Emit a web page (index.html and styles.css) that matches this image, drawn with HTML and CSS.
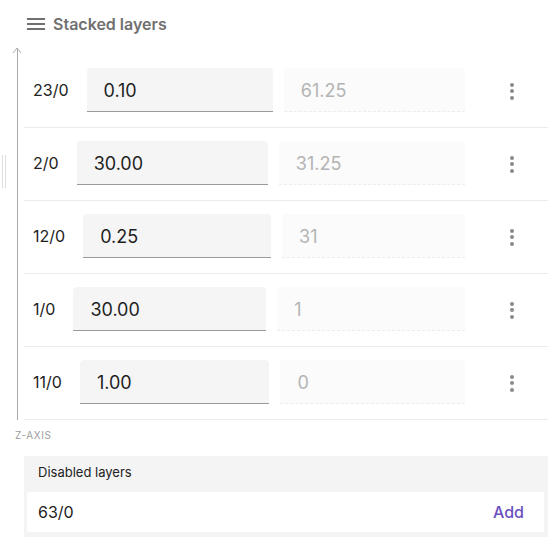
FILE: index.html
```html
<!DOCTYPE html>
<html>
<head>
<meta charset="utf-8">
<link rel="stylesheet" href="styles.css">
</head>
<body>
<div class="page">
  <div class="header">
    <svg class="menu-icon" width="18" height="14" viewBox="0 0 18 14"><rect x="0" y="1" width="18" height="2" fill="#707070"/><rect x="0" y="6" width="18" height="2" fill="#707070"/><rect x="0" y="11" width="18" height="2" fill="#707070"/></svg>
    <span class="title">Stacked layers</span>
  </div>
  <div class="stack">
    <div class="handle"></div>
    <div class="axis">
      <svg class="arrow" width="10" height="7" viewBox="0 0 10 7"><path d="M1 6 L5 1 L9 6" fill="none" stroke="#aaa" stroke-width="1"/></svg>
      <div class="axis-line"></div>
    </div>
    <div class="rows">
      <div class="row"><span class="label">23/0</span><div class="field">0.10</div><div class="field disabled">61.25</div><div class="kebab"><i></i><i></i><i></i></div></div>
      <div class="row"><span class="label">2/0</span><div class="field">30.00</div><div class="field disabled">31.25</div><div class="kebab"><i></i><i></i><i></i></div></div>
      <div class="row"><span class="label">12/0</span><div class="field">0.25</div><div class="field disabled">31</div><div class="kebab"><i></i><i></i><i></i></div></div>
      <div class="row"><span class="label">1/0</span><div class="field">30.00</div><div class="field disabled">1</div><div class="kebab"><i></i><i></i><i></i></div></div>
      <div class="row"><span class="label">11/0</span><div class="field">1.00</div><div class="field disabled">0</div><div class="kebab"><i></i><i></i><i></i></div></div>
    </div>
  </div>
  <div class="zaxis">Z-AXIS</div>
  <div class="disabled-panel">
    <div class="panel-title">Disabled layers</div>
    <div class="panel-row"><span class="panel-label">63/0</span><span class="add">Add</span></div>
  </div>
</div>
</body>
</html>
```
FILE: styles.css
```css
html, body {
  margin: 0;
  padding: 0;
  background: #ffffff;
}
body {
  font-family: Inter, "Noto Sans", sans-serif;
  color: #1f1f1f;
}
.page {
  width: 558px;
}
.header {
  height: 47px;
  display: flex;
  align-items: center;
  padding-left: 27px;
  box-sizing: border-box;
}
.menu-icon {
  display: block;
  margin-right: 8px;
}
.title {
  font-size: 16px;
  font-weight: 600;
  color: #707070;
}
.stack {
  position: relative;
  display: flex;
  padding-top: 8px;
  padding-bottom: 9px;
  margin-right: 10px;
}
.handle {
  position: absolute;
  left: 2px;
  top: 108px;
  width: 2px;
  height: 33px;
  border-left: 1px solid #dedede;
  border-right: 1px solid #dedede;
}
.axis {
  width: 24px;
  display: flex;
  flex-direction: column;
  align-items: flex-start;
  margin-top: -8px;
}
.arrow {
  display: block;
  margin-left: 12px;
}
.axis-line {
  flex: 1;
  margin-left: 16.5px;
  width: 0;
  border-left: 1px solid #aaaaaa;
  margin-top: -6px;
}
.rows {
  flex: 1;
  display: flex;
  flex-direction: column;
}
.row {
  display: flex;
  align-items: center;
  height: 73px;
  padding: 13px 16px 15px 9px;
  box-sizing: border-box;
  border-bottom: 1px solid #ebebeb;
}
.label {
  font-size: 16px;
  margin-right: 18px;
  color: #222;
}
.field {
  flex: 1 1 22px;
  height: 44px;
  box-sizing: border-box;
  background: #f5f5f5;
  border-bottom: 1px solid #9a9a9a;
  border-radius: 4px 4px 0 0;
  display: flex;
  align-items: center;
  padding-left: 17px;
  padding-top: 2px;
  font-size: 18px;
  color: #1f1f1f;
}
.field.disabled {
  flex: 1 1 17px;
  margin-left: 11px;
  background: #fbfbfb;
  border-bottom: 1px dashed #ededed;
  color: #b4b4b4;
}
.kebab {
  width: 40px;
  margin-left: 27px;
  display: flex;
  flex-direction: column;
  align-items: center;
  gap: 2.5px;
  padding-top: 2px;
}
.kebab i {
  display: block;
  width: 4px;
  height: 4px;
  border-radius: 50%;
  background: #8a8a8a;
}
.zaxis {
  margin-left: 15px;
  font-size: 10px;
  letter-spacing: 0.6px;
  color: #9d9d9d;
  line-height: 12px;
}
.disabled-panel {
  margin: 15px 10px 0 24px;
  background: #f4f4f4;
  padding: 0 4px 5px 3px;
}
.panel-title {
  height: 36px;
  display: flex;
  align-items: center;
  padding-left: 11px;
  padding-bottom: 4px;
  box-sizing: border-box;
  font-size: 13px;
  color: #222;
}
.panel-row {
  height: 40px;
  background: #ffffff;
  display: flex;
  align-items: center;
  justify-content: space-between;
  padding: 0 20px 0 11px;
}
.panel-label {
  font-size: 16px;
  color: #222;
}
.add {
  font-size: 16px;
  font-weight: 500;
  color: #6a4fc0;
}
```
